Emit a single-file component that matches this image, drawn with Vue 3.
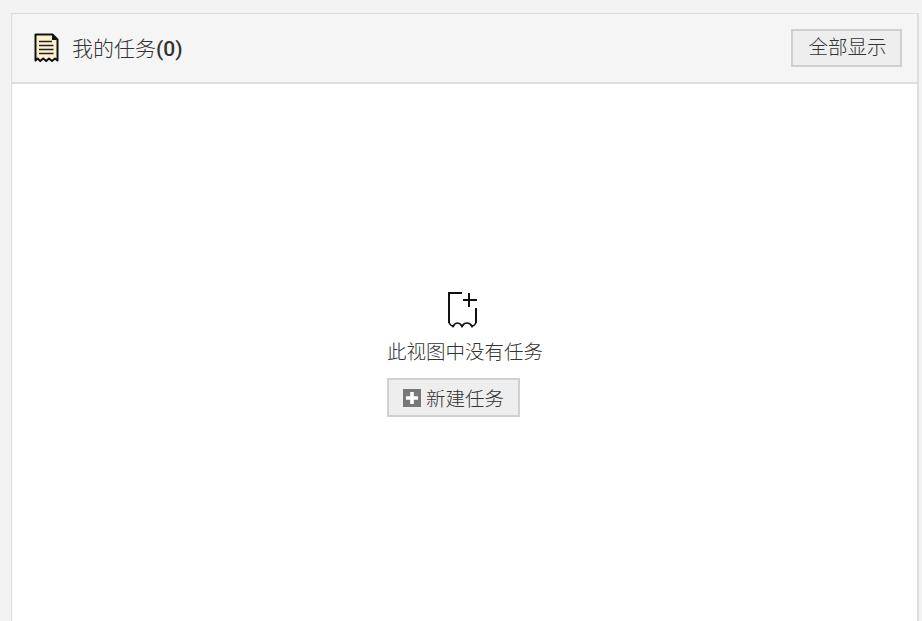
<script setup>
</script>

<template>
  <div class="page">
    <section class="card">
      <header class="head">
        <div class="title">
          <svg class="doc" width="26" height="30" viewBox="0 0 26 30">
            <path d="M2.5 1.5H19.5L24.5 6.5V27.5L22 25.5L19 28L16 25.5L13.2 28L10.2 25.5L7.2 28L4.6 25.5L2.5 27.5Z" fill="#fdf0cf" stroke="#111" stroke-width="2" stroke-linejoin="round"/>
            <path d="M19 1.5V7H24.5Z" fill="#111"/>
            <path d="M6 8.5H19M6 12.5H20.5M6 16.5H20.5M6 20.5H20.5" stroke="#222" stroke-width="1.6" fill="none"/>
          </svg>
          <span class="name">我的任务<b>(0)</b></span>
        </div>
        <button class="btn all">全部显示</button>
      </header>
      <div class="body">
        <div class="empty">
          <svg class="new" width="32" height="38" viewBox="0 0 32 38">
            <path d="M15 2H2V32M29 17V32M22 2V16M16 9H30" fill="none" stroke="#111" stroke-width="2"/>
            <path d="M2 32Q4 35 6 35Q8 32 10.5 32Q13 32 15 35Q17 32 20 32Q23 32 25 35Q27 35 29 32" fill="none" stroke="#111" stroke-width="1.4"/>
            <path d="M4 34H8L6 37ZM13 34H17L15 37ZM23 34H27L25 37Z" fill="#111"/>
          </svg>
          <p class="msg">此视图中没有任务</p>
          <button class="btn add">
            <svg class="plus" width="18" height="18" viewBox="0 0 18 18">
              <rect width="18" height="18" fill="#777"/>
              <path d="M9 3V15M3 9H15" stroke="#fff" stroke-width="3.6"/>
            </svg>
            <span>新建任务</span>
          </button>
        </div>
      </div>
    </section>
  </div>
</template>

<style>
html, body { margin: 0; background: #f3f3f3; }
</style>

<style scoped>
.page {
  height: 621px;
  overflow: hidden;
  padding: 13px 3px 0 11px;
  box-sizing: border-box;
  font-family: Roboto, "Noto Sans CJK SC", sans-serif;
  font-weight: 300;
  color: #333;
}
.card {
  height: 640px;
  border: 1px solid #ddd;
  border-right: 2px solid #ddd;
  background: #fff;
  display: flex;
  flex-direction: column;
}
.head {
  height: 68px;
  background: #f5f5f5;
  border-bottom: 2px solid #ddd;
  display: flex;
  align-items: center;
  justify-content: space-between;
  padding: 0 15px 0 21px;
  flex: none;
}
.title { display: flex; align-items: center; gap: 13px; }
.doc { display: block; }
.name { font-size: 21px; color: #333; position: relative; top: -1px; }
.name b { color: #333; font-weight: 500; }
.btn {
  font: inherit;
  color: #333;
  background: #eee;
  border: 2px solid #d0d0d0;
  box-sizing: border-box;
  display: flex;
  align-items: center;
}
.all { width: 111px; height: 38px; justify-content: center; font-size: 19.5px; padding: 0 0 5px 2px; }
.body {
  flex: 1;
  padding-top: 207px;
  padding-left: 375px;
}
.empty { display: flex; flex-direction: column; align-items: flex-start; }
.new { display: block; margin-left: 60px; }
.msg { margin: 9px 0 0; font-size: 19.5px; line-height: 30px; color: #333; }
.add { margin-top: 10px; width: 133px; height: 39px; padding: 0 0 0 14px; font-size: 19.5px; gap: 5px; }
.plus { display: block; }
</style>
